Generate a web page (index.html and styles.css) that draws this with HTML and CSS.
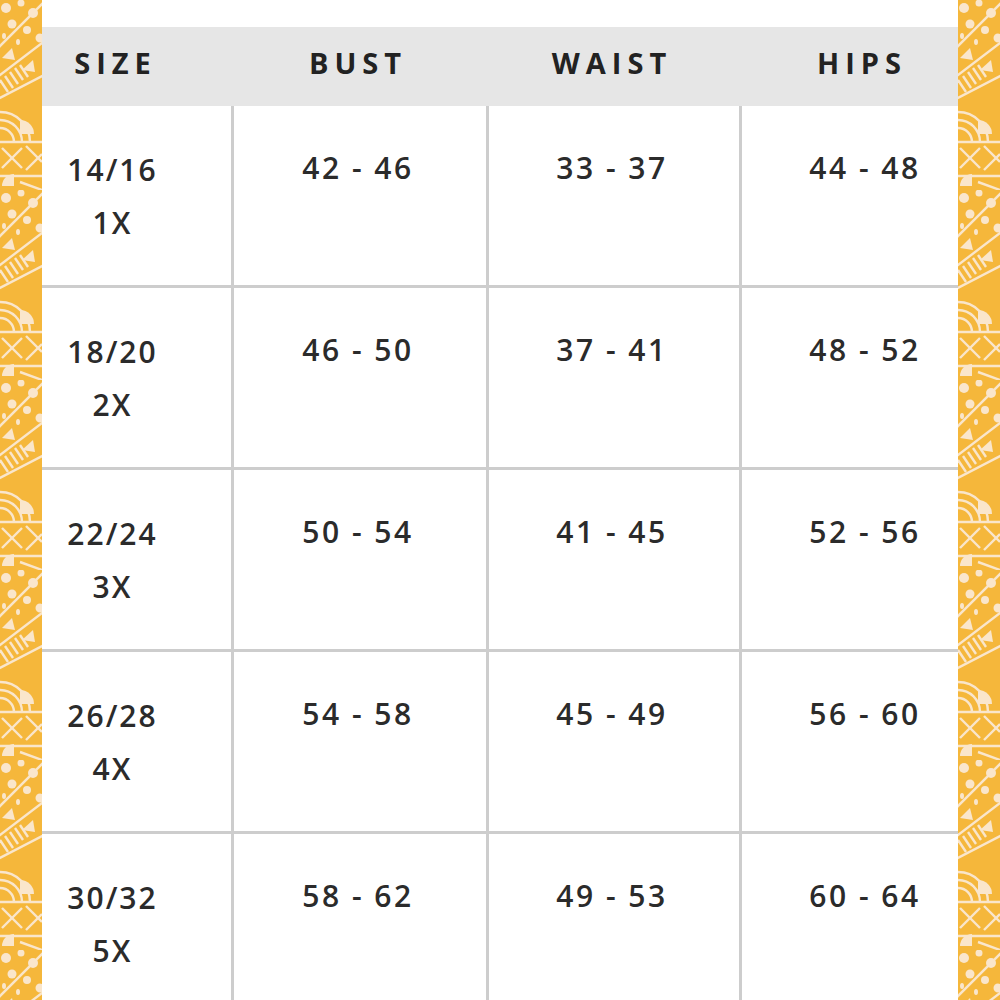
FILE: index.html
```html
<!DOCTYPE html>
<html>
<head>
<meta charset="utf-8">
<link rel="stylesheet" href="styles.css">
</head>
<body>
<div class="page">
  <svg class="strip" width="42" height="1000" viewBox="0 0 42 1000">
    <defs>
      <pattern id="tribal" width="42" height="190" patternUnits="userSpaceOnUse">
        <rect width="42" height="190" fill="#f5b73b"/>
        <g fill="#fae6cb">
          <circle cx="6" cy="8" r="5"/>
          <circle cx="21" cy="3" r="3.5"/>
          <circle cx="33" cy="13" r="5"/>
          <circle cx="12" cy="24" r="4.5"/>
          <circle cx="27" cy="30" r="4"/>
          <circle cx="40" cy="38" r="4.5"/>
          <ellipse cx="4" cy="36" rx="2" ry="3"/>
          <ellipse cx="18" cy="42" rx="2" ry="3"/>
          <polygon points="2,58 12,48 15,60"/>
          <polygon points="22,70 33,60 35,72"/>
          <path d="M20 120 A 14 14 0 0 1 34 134 L 20 134 Z"/>
          <path d="M2 186 A 12 12 0 0 1 14 174 L 14 186 Z"/>
        </g>
        <g stroke="#fae6cb" stroke-width="2.4" fill="none">
          <line x1="-4" y1="50" x2="46" y2="0"/>
          <line x1="-4" y1="78" x2="46" y2="40"/>
          <line x1="0" y1="80" x2="8" y2="92"/>
          <line x1="5" y1="76" x2="13" y2="88"/>
          <line x1="10" y1="72" x2="18" y2="84"/>
          <line x1="15" y1="68" x2="23" y2="80"/>
          <line x1="20" y1="65" x2="28" y2="77"/>
          <line x1="-4" y1="100" x2="46" y2="74"/>
          <path d="M0 112 A 30 30 0 0 1 30 142"/>
          <path d="M0 120 A 22 22 0 0 1 22 142"/>
          <path d="M0 128 A 14 14 0 0 1 14 142"/>
          <line x1="0" y1="142" x2="42" y2="142"/>
          <line x1="2" y1="148" x2="22" y2="168"/>
          <line x1="22" y1="148" x2="2" y2="168"/>
          <line x1="26" y1="146" x2="42" y2="162"/>
          <line x1="26" y1="170" x2="42" y2="154"/>
          <line x1="0" y1="176" x2="42" y2="176"/>
          <line x1="20" y1="182" x2="42" y2="190"/>
        </g>
      </pattern>
    </defs>
    <rect width="42" height="1000" fill="url(#tribal)"/>
  </svg>

  <main class="chart">
    <div class="head">
      <div class="hcell c1">SIZE</div>
      <div class="hcell c2">BUST</div>
      <div class="hcell c3">WAIST</div>
      <div class="hcell c4">HIPS</div>
    </div>
    <div class="row">
      <div class="cell c1"><span>14/16</span><span>1X</span></div>
      <div class="cell c2">42 - 46</div>
      <div class="cell c3">33 - 37</div>
      <div class="cell c4">44 - 48</div>
    </div>
    <div class="row">
      <div class="cell c1"><span>18/20</span><span>2X</span></div>
      <div class="cell c2">46 - 50</div>
      <div class="cell c3">37 - 41</div>
      <div class="cell c4">48 - 52</div>
    </div>
    <div class="row">
      <div class="cell c1"><span>22/24</span><span>3X</span></div>
      <div class="cell c2">50 - 54</div>
      <div class="cell c3">41 - 45</div>
      <div class="cell c4">52 - 56</div>
    </div>
    <div class="row">
      <div class="cell c1"><span>26/28</span><span>4X</span></div>
      <div class="cell c2">54 - 58</div>
      <div class="cell c3">45 - 49</div>
      <div class="cell c4">56 - 60</div>
    </div>
    <div class="row last">
      <div class="cell c1"><span>30/32</span><span>5X</span></div>
      <div class="cell c2">58 - 62</div>
      <div class="cell c3">49 - 53</div>
      <div class="cell c4">60 - 64</div>
    </div>
  </main>

  <svg class="strip" width="42" height="1000" viewBox="0 0 42 1000">
    <rect width="42" height="1000" fill="url(#tribal)"/>
  </svg>
</div>
</body>
</html>
```

FILE: styles.css
```css
html, body {
  margin: 0;
  padding: 0;
  background: #ffffff;
}

.page {
  display: flex;
  width: 1000px;
  height: 1000px;
  overflow: hidden;
}

.strip {
  flex: 0 0 42px;
  display: block;
}

.chart {
  flex: 0 0 916px;
  padding-top: 27px;
  font-family: "Open Sans", "Liberation Sans", sans-serif;
  color: #222222;
}

.head,
.row {
  display: grid;
  grid-template-columns: 189px 3px 252px 3px 250px 3px 216px;
}

.head {
  height: 79px;
  background: #e6e6e6;
  align-items: center;
}

.hcell {
  font-size: 29px;
  font-weight: 700;
  letter-spacing: 6px;
  text-align: center;
  padding-bottom: 8px;
}

.c1 { grid-column: 1; padding-right: 48px; }
.c2 { grid-column: 3; padding-right: 4px; }
.c3 { grid-column: 5; padding-right: 4px; }
.c4 { grid-column: 7; padding-left: 30px; }

.hcell.c1 { padding-right: 42px; }
.hcell.c4 { padding-left: 24px; }

.row {
  height: 179px;
  border-bottom: 3px solid #cdcdcd;
  background:
    linear-gradient(#cdcdcd, #cdcdcd) 189px 0 / 3px 100% no-repeat,
    linear-gradient(#cdcdcd, #cdcdcd) 444px 0 / 3px 100% no-repeat,
    linear-gradient(#cdcdcd, #cdcdcd) 697px 0 / 3px 100% no-repeat,
    #ffffff;
}

.cell {
  font-size: 30px;
  font-weight: 600;
  color: #2b2b2b;
  letter-spacing: 2.5px;
  text-align: center;
  padding-top: 40px;
  line-height: 44px;
}

.cell.c1 {
  display: flex;
  flex-direction: column;
  align-items: center;
  line-height: 53px;
  padding-top: 37px;
  letter-spacing: 2px;
}
```
